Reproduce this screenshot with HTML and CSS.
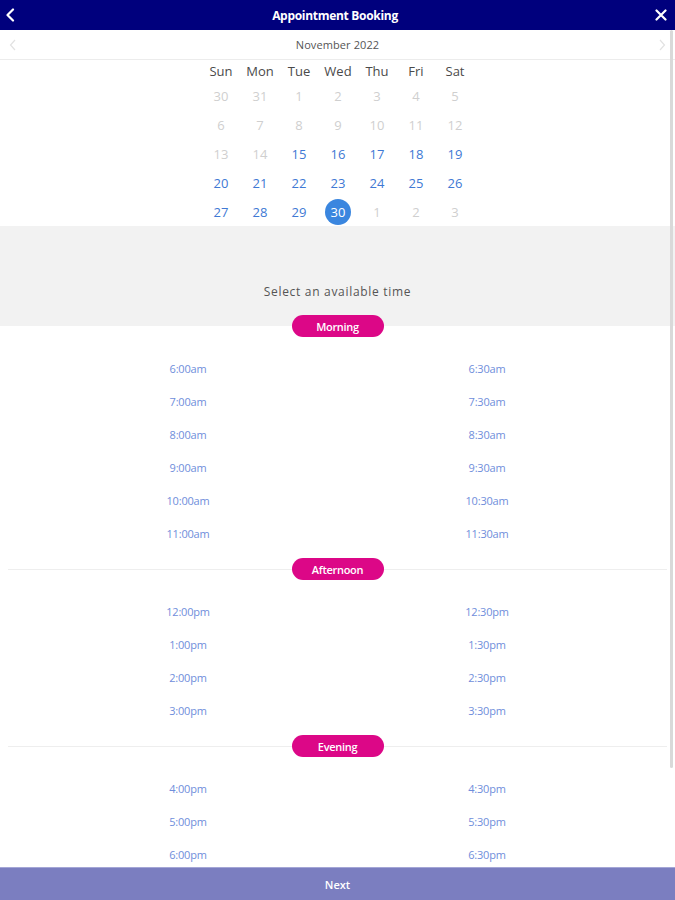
FILE: index.html
```html
<!DOCTYPE html>
<html>
<head>
<meta charset="utf-8">
<link rel="stylesheet" href="styles.css">
</head>
<body>
<div class="app">
  <header class="topbar">
    <svg class="icon back" width="10" height="14" viewBox="0 0 10 14"><path d="M8 1.5 L2.5 7 L8 12.5" fill="none" stroke="#fff" stroke-width="2.2" stroke-linecap="round" stroke-linejoin="round"/></svg>
    <div class="title">Appointment Booking</div>
    <svg class="icon close" width="12" height="12" viewBox="0 0 12 12"><path d="M1.5 1.5 L10.5 10.5 M10.5 1.5 L1.5 10.5" fill="none" stroke="#fff" stroke-width="2.2" stroke-linecap="round"/></svg>
  </header>
  <div class="content">
    <div class="monthbar">
      <svg class="mchev" width="8" height="12" viewBox="0 0 8 12"><path d="M6 1 L1.5 6 L6 11" fill="none" stroke="#e2e2e2" stroke-width="1.2"/></svg>
      <div class="month">November 2022</div>
      <svg class="mchev" width="8" height="12" viewBox="0 0 8 12"><path d="M2 1 L6.5 6 L2 11" fill="none" stroke="#e2e2e2" stroke-width="1.2"/></svg>
    </div>
    <div class="calendar">
      <div class="grid">
        <div class="wd">Sun</div><div class="wd">Mon</div><div class="wd">Tue</div><div class="wd">Wed</div><div class="wd">Thu</div><div class="wd">Fri</div><div class="wd">Sat</div>
        <div class="d off">30</div><div class="d off">31</div><div class="d off">1</div><div class="d off">2</div><div class="d off">3</div><div class="d off">4</div><div class="d off">5</div>
        <div class="d off">6</div><div class="d off">7</div><div class="d off">8</div><div class="d off">9</div><div class="d off">10</div><div class="d off">11</div><div class="d off">12</div>
        <div class="d off">13</div><div class="d off">14</div><div class="d on">15</div><div class="d on">16</div><div class="d on">17</div><div class="d on">18</div><div class="d on">19</div>
        <div class="d on">20</div><div class="d on">21</div><div class="d on">22</div><div class="d on">23</div><div class="d on">24</div><div class="d on">25</div><div class="d on">26</div>
        <div class="d on">27</div><div class="d on">28</div><div class="d on">29</div><div class="d sel"><span>30</span></div><div class="d off">1</div><div class="d off">2</div><div class="d off">3</div>
      </div>
    </div>
    <div class="prompt">Select an available time</div>

    <section class="period first">
      <div class="phead"><span class="pill">Morning</span></div>
      <div class="slots">
        <div class="slot">6:00am</div><div class="slot">6:30am</div>
        <div class="slot">7:00am</div><div class="slot">7:30am</div>
        <div class="slot">8:00am</div><div class="slot">8:30am</div>
        <div class="slot">9:00am</div><div class="slot">9:30am</div>
        <div class="slot">10:00am</div><div class="slot">10:30am</div>
        <div class="slot">11:00am</div><div class="slot">11:30am</div>
      </div>
    </section>
    <section class="period">
      <div class="phead"><span class="pill">Afternoon</span></div>
      <div class="slots">
        <div class="slot">12:00pm</div><div class="slot">12:30pm</div>
        <div class="slot">1:00pm</div><div class="slot">1:30pm</div>
        <div class="slot">2:00pm</div><div class="slot">2:30pm</div>
        <div class="slot">3:00pm</div><div class="slot">3:30pm</div>
      </div>
    </section>
    <section class="period">
      <div class="phead"><span class="pill">Evening</span></div>
      <div class="slots">
        <div class="slot">4:00pm</div><div class="slot">4:30pm</div>
        <div class="slot">5:00pm</div><div class="slot">5:30pm</div>
        <div class="slot">6:00pm</div><div class="slot">6:30pm</div>
      </div>
    </section>
    <div class="scrollbar"></div>
  </div>
  <footer class="next">Next</footer>
</div>
</body>
</html>
```

FILE: styles.css
```css
* { box-sizing: border-box; }
html, body { margin: 0; padding: 0; }
body {
  font-family: "Open Sans", "Noto Sans", sans-serif;
  background: #fff;
  width: 675px;
  height: 900px;
  overflow: hidden;
}
.app {
  width: 675px;
  height: 900px;
  display: flex;
  flex-direction: column;
}
.topbar {
  height: 30px;
  flex: 0 0 30px;
  background: #00007d;
  display: flex;
  align-items: center;
  justify-content: space-between;
  padding: 0 8px 0 5px;
}
.title {
  color: #fff;
  font-size: 12px;
  font-weight: 700;
  letter-spacing: -0.3px;
}
.icon { display: block; }
.close { margin-top: -1px; }
.content {
  flex: 1 1 auto;
  overflow: hidden;
  position: relative;
}
.monthbar {
  height: 30px;
  border-bottom: 1px solid #ececec;
  display: flex;
  align-items: center;
  justify-content: space-between;
  padding: 0 9px 0 9px;
}
.month {
  font-size: 11px;
  color: #555;
  letter-spacing: 0.1px;
}
.calendar {
  display: flex;
  justify-content: center;
  padding-left: 1px;
}
.grid {
  display: grid;
  grid-template-columns: repeat(7, 39px);
  grid-template-rows: 21px repeat(5, 29px);
}
.wd {
  font-size: 13px;
  color: #4a4a4a;
  display: flex;
  align-items: center;
  justify-content: center;
  padding-top: 1px;
}
.d {
  font-size: 13px;
  display: flex;
  align-items: center;
  justify-content: center;
}
.d.off { color: #cfcfcf; }
.d.on { color: #4079d4; }
.d.sel span {
  width: 26px;
  height: 26px;
  border-radius: 50%;
  background: #3a86df;
  color: #fff;
  display: flex;
  align-items: center;
  justify-content: center;
}
.prompt {
  height: 100px;
  background: #f2f2f2;
  display: flex;
  align-items: flex-end;
  justify-content: center;
  padding-bottom: 26px;
  font-size: 12px;
  color: #555;
  letter-spacing: 0.7px;
}
.period { padding-bottom: 8px; }
.phead {
  height: 22px;
  position: relative;
  display: flex;
  justify-content: center;
  align-items: center;
}
.phead::before {
  content: "";
  position: absolute;
  left: 8px;
  right: 8px;
  top: 11px;
  height: 1px;
  background: #eeeeee;
}
.period.first .phead { margin-top: -11px; }
.period.first .phead::before { display: none; }
.pill {
  position: relative;
  width: 92px;
  height: 22px;
  border-radius: 11px;
  background: #dc0787;
  color: #fff;
  font-size: 11px;
  font-weight: 600;
  letter-spacing: -0.3px;
  display: flex;
  align-items: center;
  justify-content: center;
}
.slots {
  padding-top: 15px;
  display: grid;
  grid-template-columns: 299px 299px;
  justify-content: center;
  grid-auto-rows: 33px;
}
.slot {
  display: flex;
  align-items: center;
  justify-content: center;
  font-size: 11px;
  color: #6f8edb;
  letter-spacing: -0.2px;
}
.scrollbar {
  position: absolute;
  right: 2px;
  top: 0;
  width: 3px;
  height: 738px;
  background: #d9d9d9;
  border-radius: 2px;
}
.next {
  flex: 0 0 33px;
  height: 33px;
  background: #7b7ec0;
  border-top: 1px solid #a4a6d6;
  color: #fff;
  font-size: 11px;
  font-weight: 600;
  display: flex;
  align-items: center;
  justify-content: center;
}
```
